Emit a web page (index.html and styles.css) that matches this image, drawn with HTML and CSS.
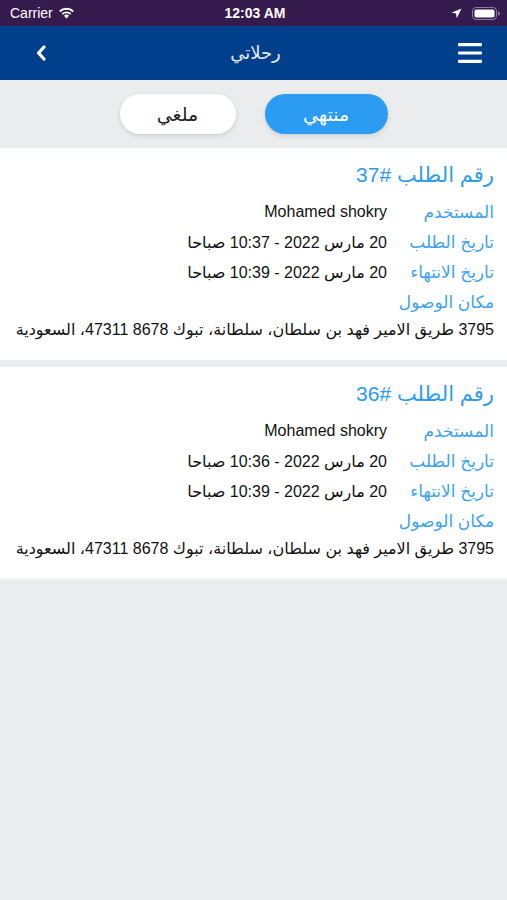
FILE: index.html
```html
<!DOCTYPE html>
<html lang="ar" dir="rtl">
<head>
  <meta charset="UTF-8" />
  <title>رحلاتي</title>
  <link rel="stylesheet" href="styles.css">
</head>
<body>
  <div class="status-bar">
    <div class="status-left">
      <span>Carrier</span>
      <svg class="wifi" width="17" height="12" viewBox="0 0 17 12">
        <path d="M8.5 11.5 L6 8.8 A3.6 3.6 0 0 1 11 8.8 Z" fill="#fff"/>
        <path d="M3.6 6.4 A7 7 0 0 1 13.4 6.4 L12 7.8 A5 5 0 0 0 5 7.8 Z" fill="#fff"/>
        <path d="M1 3.8 A10.8 10.8 0 0 1 16 3.8 L14.6 5.2 A8.8 8.8 0 0 0 2.4 5.2 Z" fill="#fff"/>
      </svg>
    </div>
    <div class="status-time">12:03 AM</div>
    <div class="status-right">
      <svg width="11" height="11" viewBox="0 0 11 11">
        <path d="M10.5 0.5 L0.5 4.8 L5 5.6 L5.8 10.2 Z" fill="#fff"/>
      </svg>
      <svg width="28" height="13" viewBox="0 0 28 13">
        <rect x="0.5" y="0.5" width="24" height="12" rx="3.5" fill="none" stroke="#8a7d99" stroke-width="1"/>
        <rect x="2.5" y="2.5" width="20" height="8" rx="1.8" fill="#fff"/>
        <path d="M26 4.5 a1.5 1.5 0 0 1 0 4 Z" fill="#8a7d99"/>
      </svg>
    </div>
  </div>

  <header class="nav">
    <button class="nav-btn" aria-label="menu">
      <svg width="24" height="22" viewBox="0 0 24 22">
        <rect x="0" y="1" width="24" height="3.2" rx="1" fill="#fff"/>
        <rect x="0" y="9.4" width="24" height="3.2" rx="1" fill="#fff"/>
        <rect x="0" y="17.8" width="24" height="3.2" rx="1" fill="#fff"/>
      </svg>
    </button>
    <h1 class="nav-title">رحلاتي</h1>
    <button class="nav-btn" aria-label="back">
      <svg width="12" height="16" viewBox="0 0 12 16">
        <path d="M9 2 L3.5 8 L9 14" fill="none" stroke="#fff" stroke-width="3.2" stroke-linecap="round" stroke-linejoin="round"/>
      </svg>
    </button>
  </header>

  <div class="tabs">
    <button class="tab active">منتهي</button>
    <button class="tab">ملغي</button>
  </div>

  <div class="trips">
    <div class="card">
      <h2 class="card-title">رقم الطلب #37</h2>
      <div class="row"><span class="label">المستخدم</span><span class="value">Mohamed shokry</span></div>
      <div class="row"><span class="label">تاريخ الطلب</span><span class="value">20 مارس 2022 - 10:37 صباحا</span></div>
      <div class="row"><span class="label">تاريخ الانتهاء</span><span class="value">20 مارس 2022 - 10:39 صباحا</span></div>
      <div class="row"><span class="label">مكان الوصول</span></div>
      <div class="address">3795 طريق الامير فهد بن سلطان، سلطانة، تبوك 8678 47311، السعودية</div>
    </div>

    <div class="card">
      <h2 class="card-title">رقم الطلب #36</h2>
      <div class="row"><span class="label">المستخدم</span><span class="value">Mohamed shokry</span></div>
      <div class="row"><span class="label">تاريخ الطلب</span><span class="value">20 مارس 2022 - 10:36 صباحا</span></div>
      <div class="row"><span class="label">تاريخ الانتهاء</span><span class="value">20 مارس 2022 - 10:39 صباحا</span></div>
      <div class="row"><span class="label">مكان الوصول</span></div>
      <div class="address">3795 طريق الامير فهد بن سلطان، سلطانة، تبوك 8678 47311، السعودية</div>
    </div>
  </div>
</body>
</html>
```

FILE: styles.css
```css
html, body {
  margin: 0;
  padding: 0;
}

body {
  font-family: 'Liberation Sans', 'DejaVu Sans', sans-serif;
  background-color: #ebeced;
  min-height: 900px;
  color: #111;
}

.status-bar {
  direction: ltr;
  height: 26px;
  background-color: #351a4e;
  color: #fff;
  display: flex;
  align-items: center;
  justify-content: space-between;
  padding: 0 7px 0 10px;
  font-size: 14px;
}

.status-left {
  display: flex;
  align-items: center;
  gap: 5px;
  width: 120px;
}

.status-time {
  font-weight: bold;
  font-size: 14px;
}

.status-right {
  display: flex;
  align-items: center;
  justify-content: flex-end;
  gap: 10px;
  width: 120px;
}

.nav {
  height: 54px;
  background-color: #003f8c;
  display: flex;
  align-items: center;
  justify-content: space-between;
  padding: 0 24px 0 28px;
}

.nav-btn {
  background: none;
  border: none;
  padding: 0;
  width: 26px;
  height: 26px;
  display: flex;
  align-items: center;
  justify-content: center;
}

.nav-title {
  margin: 0;
  font-size: 18px;
  font-weight: normal;
  color: #e6ebf4;
}

.tabs {
  height: 68px;
  display: flex;
  align-items: center;
  justify-content: center;
  gap: 29px;
}

.tab {
  height: 40px;
  width: 116px;
  border: none;
  border-radius: 20px;
  background-color: #fff;
  color: #222;
  font-family: 'Liberation Sans', 'DejaVu Sans', sans-serif;
  font-size: 19px;
  box-shadow: 0 2px 5px rgba(0,0,0,0.12);
}

.tab.active {
  width: 123px;
  background-color: #2c9bf2;
  color: #fff;
}

.trips {
  display: flex;
  flex-direction: column;
  gap: 7px;
}

.card {
  background-color: #fff;
  padding: 14px 13px 17px 13px;
}

.card-title {
  margin: 0 0 9px 0;
  font-size: 21px;
  line-height: 26px;
  font-weight: normal;
  color: #2d9bf0;
}

.row {
  display: flex;
  align-items: center;
  height: 30px;
  font-size: 16px;
}

.label {
  width: 107px;
  flex-shrink: 0;
  color: #3da2f0;
  font-size: 17px;
}

.value {
  color: #111;
  font-size: 16px;
}

.address {
  font-size: 16px;
  line-height: 26px;
  color: #111;
}
```
